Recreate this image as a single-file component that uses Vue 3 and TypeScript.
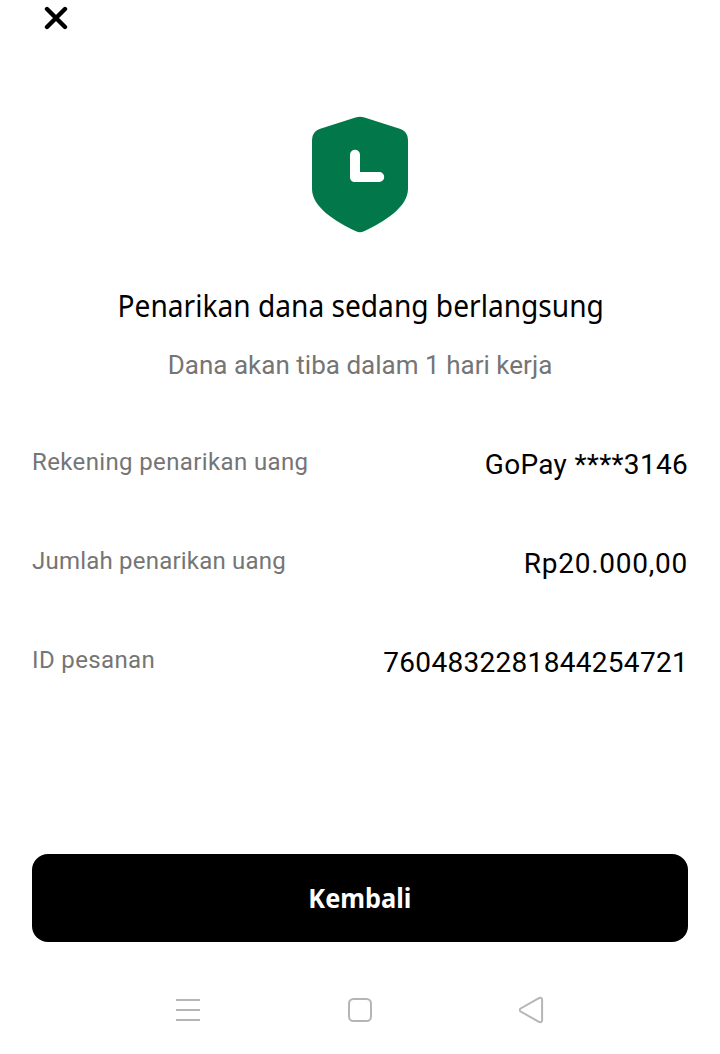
<script setup lang="ts">
interface Detail {
  id: string
  label: string
  value: string
}

const details: Detail[] = [
  { id: 'account', label: 'Rekening penarikan uang', value: 'GoPay ****3146' },
  { id: 'amount', label: 'Jumlah penarikan uang', value: 'Rp20.000,00' },
  { id: 'order', label: 'ID pesanan', value: '7604832281844254721' },
]
</script>

<template>
  <main class="screen">
    <header class="top-bar">
      <button class="close" aria-label="Tutup">
        <svg width="24" height="24" viewBox="0 0 24 24">
          <path d="M3 3L21 21M21 3L3 21" fill="none" stroke="#000" stroke-width="4.4" stroke-linecap="round" />
        </svg>
      </button>
    </header>

    <section class="status">
      <svg class="shield" width="96" height="116" viewBox="0 0 96 116">
        <path
          d="M43.5 1.6Q48 -.1 52.5 1.6L88.5 13.1Q96 16.1 96 24V73C96 91 72 106 52 115.3Q48 117.2 44 115.3C24 106 0 91 0 73V24Q0 16.1 7.5 13.1Z"
          fill="#02784a"
        />
        <path
          d="M38 38.8a5 5 0 0 1 10 0V56H67.2a5 5 0 0 1 0 10H42.5a4.5 4.5 0 0 1-4.5-4.5Z"
          fill="#fff"
        />
      </svg>
      <h1 class="title">Penarikan dana sedang berlangsung</h1>
      <p class="subtitle">Dana akan tiba dalam 1 hari kerja</p>
    </section>

    <dl class="details">
      <div v-for="item in details" :key="item.id" class="row" :class="item.id">
        <dt>{{ item.label }}</dt>
        <dd>{{ item.value }}</dd>
      </div>
    </dl>

    <button class="back"><span>Kembali</span></button>

    <nav class="system-nav">
      <svg width="26" height="28" viewBox="0 0 26 28">
        <path d="M1 4H25M1 14H25M1 24H25" fill="none" stroke="#b5b5b5" stroke-width="2" />
      </svg>
      <svg width="26" height="28" viewBox="0 0 26 28">
        <rect x="2" y="3" width="22" height="22" rx="4.5" fill="none" stroke="#b5b5b5" stroke-width="2" />
      </svg>
      <svg width="26" height="28" viewBox="0.9 0 26 28">
        <path
          d="M2.5 12.5L20.8 2.2Q24 .9 24 4V24Q24 27.1 20.8 25.8L2.5 15.5Q.5 14 2.5 12.5Z"
          fill="none"
          stroke="#b5b5b5"
          stroke-width="2"
        />
      </svg>
    </nav>
  </main>
</template>

<style>
body {
  margin: 0;
  background: #fff;
}
</style>

<style scoped>
.screen {
  box-sizing: border-box;
  width: 720px;
  height: 1054px;
  overflow: hidden;
  display: flex;
  flex-direction: column;
  background: #fff;
  color: #000;
  font-family: Roboto, "Liberation Sans", sans-serif;
}
button {
  border: 0;
  padding: 0;
}
.top-bar {
  height: 116px;
  padding: 6px 44px 0;
  box-sizing: border-box;
}
.close {
  display: block;
  width: 24px;
  height: 24px;
  background: none;
}
.status {
  height: 324px;
  display: flex;
  flex-direction: column;
  align-items: center;
}
.shield {
  display: block;
  overflow: visible;
}
.title {
  margin: 52px 0 0 1px;
  font: 400 30.5px/42px "Noto Sans", sans-serif;
  white-space: nowrap;
  transform: scaleX(0.922);
}
.subtitle {
  margin: 21px 0 0;
  color: #757575;
  font-size: 26px;
  line-height: 36px;
  letter-spacing: 0.02px;
  white-space: nowrap;
}
.details {
  margin: 0 32px;
  height: 414px;
}
.row {
  height: 99px;
  display: flex;
  justify-content: space-between;
  align-items: flex-start;
}
dt {
  padding-top: 6px;
  color: #757575;
  font-size: 24px;
  line-height: 32px;
  letter-spacing: 0.37px;
}
dd {
  margin: 0;
  padding-top: 7px;
  font-size: 28px;
  line-height: 36px;
  letter-spacing: 0.3px;
}
.amount dt {
  letter-spacing: 0.21px;
}
.amount dd {
  letter-spacing: 0.75px;
}
.back {
  height: 88px;
  flex: none;
  margin: 0 32px;
  border-radius: 16px;
  background: #000;
  color: #fff;
  font: 700 27px/86px "Noto Sans", sans-serif;
}
.back span {
  display: inline-block;
  transform: scaleX(0.94);
}
.system-nav {
  display: flex;
  justify-content: space-between;
  margin: 54px 175px 0;
}
</style>
